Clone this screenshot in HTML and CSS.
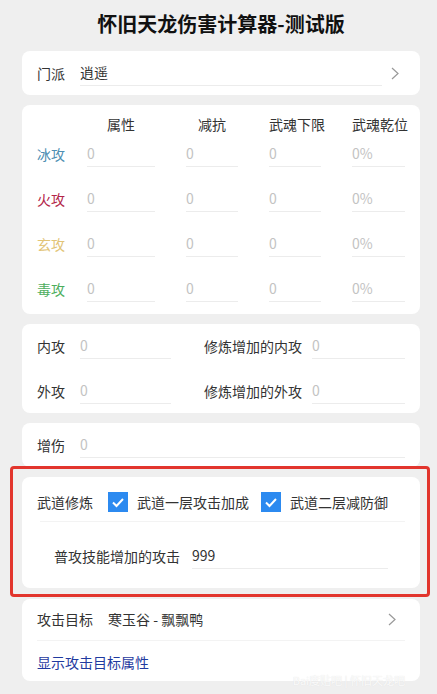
FILE: index.html
```html
<!DOCTYPE html>
<html lang="zh-CN">
<head>
    <meta charset="UTF-8">
    <meta name="viewport" content="width=device-width, initial-scale=1.0">
    <title>怀旧天龙伤害计算器-测试版</title>
    <link rel="stylesheet" href="styles.css">
</head>
<body>
    <h1 class="title">怀旧天龙伤害计算器-测试版</h1>

    <!-- 门派 -->
    <div class="card card-line">
        <div class="row">
            <span class="label">门派</span>
            <input class="field grow value" type="text" value="逍遥" readonly>
            <svg class="chevron" width="8" height="13" viewBox="0 0 8 13"><polyline points="1,1 7,6.5 1,12" fill="none" stroke="#999" stroke-width="1.2"/></svg>
        </div>
    </div>

    <!-- 属性表 -->
    <div class="card card-attr">
        <div class="attr-head">
            <span></span>
            <span>属性</span>
            <span>减抗</span>
            <span>武魂下限</span>
            <span>武魂乾位</span>
        </div>
        <div class="attr-row">
            <span class="label ice">冰攻</span>
            <input class="field" placeholder="0">
            <input class="field" placeholder="0">
            <input class="field" placeholder="0">
            <input class="field" placeholder="0%">
        </div>
        <div class="attr-row">
            <span class="label fire">火攻</span>
            <input class="field" placeholder="0">
            <input class="field" placeholder="0">
            <input class="field" placeholder="0">
            <input class="field" placeholder="0%">
        </div>
        <div class="attr-row">
            <span class="label mystic">玄攻</span>
            <input class="field" placeholder="0">
            <input class="field" placeholder="0">
            <input class="field" placeholder="0">
            <input class="field" placeholder="0%">
        </div>
        <div class="attr-row">
            <span class="label poison">毒攻</span>
            <input class="field" placeholder="0">
            <input class="field" placeholder="0">
            <input class="field" placeholder="0">
            <input class="field" placeholder="0%">
        </div>
    </div>

    <!-- 内外攻 -->
    <div class="card card-attack">
        <div class="row">
            <span class="label">内攻</span>
            <input class="field short" placeholder="0">
            <span class="label label-long">修炼增加的内攻</span>
            <input class="field grow" placeholder="0">
        </div>
        <div class="row">
            <span class="label">外攻</span>
            <input class="field short" placeholder="0">
            <span class="label label-long">修炼增加的外攻</span>
            <input class="field grow" placeholder="0">
        </div>
    </div>

    <!-- 增伤 -->
    <div class="card card-line">
        <div class="row">
            <span class="label">增伤</span>
            <input class="field grow" placeholder="0">
        </div>
    </div>

    <!-- 武道修炼 -->
    <div class="card card-wudao marked">
        <div class="check-row">
            <span class="check-title">武道修炼</span>
            <span class="check"><svg width="20" height="20" viewBox="0 0 20 20"><polyline points="5,10.5 8.5,14 15,7" fill="none" stroke="#fff" stroke-width="2"/></svg></span>
            <span class="check-text">武道一层攻击加成</span>
            <span class="check"><svg width="20" height="20" viewBox="0 0 20 20"><polyline points="5,10.5 8.5,14 15,7" fill="none" stroke="#fff" stroke-width="2"/></svg></span>
            <span class="check-text">武道二层减防御</span>
        </div>
        <div class="row sub-row">
            <span class="label">普攻技能增加的攻击</span>
            <input class="field grow value" value="999">
        </div>
    </div>

    <!-- 攻击目标 -->
    <div class="card card-target">
        <div class="target-row">
            <span class="check-title">攻击目标</span>
            <span class="target-name">寒玉谷 - 飘飘鸭</span>
            <svg class="chevron" width="8" height="13" viewBox="0 0 8 13"><polyline points="1,1 7,6.5 1,12" fill="none" stroke="#999" stroke-width="1.2"/></svg>
        </div>
        <a class="link" href="#">显示攻击目标属性</a>
    </div>

    <div class="watermark">Bai度贴吧 | 怀旧天龙吧</div>
</body>
</html>
```

FILE: styles.css
```css
body {
    margin: 0;
    padding: 0 17px 0 22px;
    background: #efefef;
    font-family: "Noto Sans CJK SC", "Noto Sans", sans-serif;
    font-size: 14px;
    color: #333;
    position: relative;
    min-height: 694px;
    box-sizing: border-box;
}
.title {
    margin: 0;
    padding-top: 10px;
    height: 28px;
    line-height: 28px;
    font-size: 20px;
    font-weight: bold;
    text-align: center;
    color: #111;
}
.card {
    background: #fff;
    border-radius: 8px;
    padding: 9px 15px;
    margin-top: 10px;
}
.title + .card {
    margin-top: 13px;
}
.row {
    display: flex;
    align-items: center;
    height: 26px;
}
.label {
    width: 43px;
    flex-shrink: 0;
    white-space: nowrap;
    line-height: 26px;
}
.field {
    height: 26px;
    padding: 0 0 1px 0;
    border: none;
    border-bottom: 1px solid #ececec;
    box-sizing: border-box;
    font-family: inherit;
    font-size: 14px;
    color: #333;
    background: transparent;
    outline: none;
    min-width: 0;
}
.field::placeholder {
    color: #c3c3c3;
}
.grow {
    flex: 1;
}
.short {
    width: 91px;
}
.label-long {
    width: 108px;
    margin-left: 33px;
}
.chevron {
    margin-left: 9px;
    margin-right: 6px;
}

/* attribute table */
.card-attr {
    padding-bottom: 12px;
}
.attr-head,
.attr-row {
    display: grid;
    grid-template-columns: 50px 99px 83px 83px 53px;
}
.attr-head {
    line-height: 20px;
}
.attr-head span {
    margin-right: 31px;
    text-align: center;
    white-space: nowrap;
}
.attr-head span:last-child {
    margin-right: 0;
}
.attr-row {
    height: 26px;
    align-items: center;
    margin-top: 19px;
}
.attr-head + .attr-row {
    margin-top: 7px;
}
.attr-row .field {
    margin-right: 31px;
}
.attr-row .field:last-child {
    margin-right: 0;
}
.ice { color: #4f8fb3; }
.fire { color: #b3264a; }
.mystic { color: #e2c477; }
.poison { color: #4eae5e; }

.card-attack .row + .row {
    margin-top: 19px;
}

/* wudao */
.card-wudao {
    padding: 15px 15px 19px;
    position: relative;
}
.marked::after {
    content: "";
    position: absolute;
    top: -11px;
    left: -12px;
    right: -10px;
    bottom: -9px;
    border: 3px solid #e2352d;
    border-radius: 4px;
}
.check-row {
    display: flex;
    align-items: center;
    height: 20px;
    padding-bottom: 9px;
    border-bottom: 1px solid #f3f3f3;
    margin-left: 3px;
}
.check-row .check-title {
    margin-left: -3px;
}
.check-title {
    white-space: nowrap;
}
.check {
    width: 20px;
    height: 20px;
    background: #2c8af0;
    margin-left: 15px;
    display: flex;
}
.check + .check-text {
    margin-left: 9px;
}
.check-text + .check {
    margin-left: 12px;
}
.sub-row {
    margin-top: 21px;
    padding-left: 17px;
    padding-right: 17px;
}
.sub-row .label {
    width: 138px;
}

/* target */
.card-target {
    padding: 10px 15px 9px;
    margin-top: 11px;
}
.target-row {
    display: flex;
    align-items: center;
    height: 20px;
    padding-bottom: 11px;
    border-bottom: 1px solid #f3f3f3;
}
.target-name {
    margin-left: 15px;
    flex: 1;
}
.target-row .chevron {
    margin-right: 9px;
}
.link {
    display: block;
    margin-top: 11px;
    line-height: 20px;
    color: #1f3aa0;
    text-decoration: none;
}
.watermark {
    position: absolute;
    right: 32px;
    bottom: 6px;
    font-size: 11px;
    color: rgba(255, 255, 255, 0.85);
    text-shadow: 0 0 1px #ddd;
}
```
